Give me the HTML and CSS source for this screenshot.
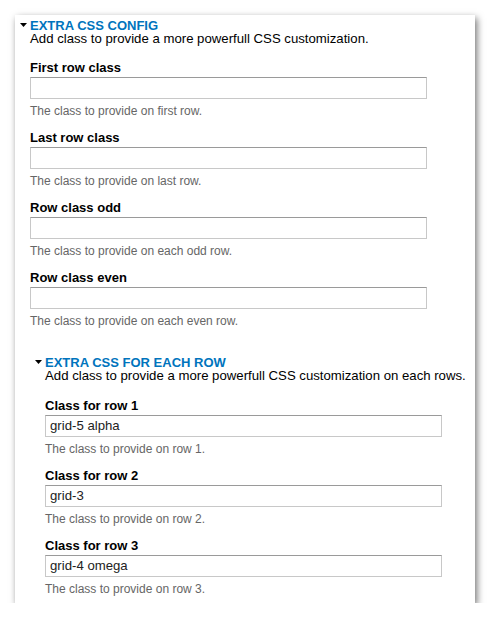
FILE: index.html
```html
<!DOCTYPE html>
<html>
<head>
<meta charset="utf-8">
<link rel="stylesheet" href="styles.css">
</head>
<body>
<div class="card">
  <section class="group">
    <div class="legend">
      <svg class="arrow" width="7" height="4" viewBox="0 0 7 4"><polygon points="0,0 7,0 3.5,4" fill="#000"/></svg>
      <span>EXTRA CSS CONFIG</span>
    </div>
    <div class="desc">Add class to provide a more powerfull CSS customization.</div>
    <div class="fields outer-fields">
      <div class="field">
        <label>First row class</label>
        <input type="text" value="">
        <div class="help">The class to provide on first row.</div>
      </div>
      <div class="field">
        <label>Last row class</label>
        <input type="text" value="">
        <div class="help">The class to provide on last row.</div>
      </div>
      <div class="field">
        <label>Row class odd</label>
        <input type="text" value="">
        <div class="help">The class to provide on each odd row.</div>
      </div>
      <div class="field">
        <label>Row class even</label>
        <input type="text" value="">
        <div class="help">The class to provide on each even row.</div>
      </div>
    </div>
    <section class="group nested">
      <div class="legend">
        <svg class="arrow" width="7" height="4" viewBox="0 0 7 4"><polygon points="0,0 7,0 3.5,4" fill="#000"/></svg>
        <span>EXTRA CSS FOR EACH ROW</span>
      </div>
      <div class="desc">Add class to provide a more powerfull CSS customization on each rows.</div>
      <div class="fields">
        <div class="field">
          <label>Class for row 1</label>
          <input type="text" value="grid-5 alpha">
          <div class="help">The class to provide on row 1.</div>
        </div>
        <div class="field">
          <label>Class for row 2</label>
          <input type="text" value="grid-3">
          <div class="help">The class to provide on row 2.</div>
        </div>
        <div class="field">
          <label>Class for row 3</label>
          <input type="text" value="grid-4 omega">
          <div class="help">The class to provide on row 3.</div>
        </div>
      </div>
    </section>
  </section>
</div>
</body>
</html>
```

FILE: styles.css
```css
html, body {
  margin: 0;
  padding: 0;
  background: #fff;
}
body {
  font-family: "Liberation Sans", Arial, sans-serif;
  font-size: 13px;
  color: #000;
  padding: 15px 0 0 15px;
}
.card {
  width: 460px;
  box-sizing: border-box;
  background: #fff;
  padding: 4px 15px 7px 15px;
  box-shadow: 2px 3px 7px rgba(0, 0, 0, 0.55);
}
.group {
  display: flex;
  flex-direction: column;
}
.legend {
  position: relative;
  font-weight: bold;
  color: #0074bd;
  line-height: 13px;
}
.arrow {
  position: absolute;
  left: -10px;
  top: 4px;
}
.desc {
  font-size: 13.2px;
  line-height: 13px;
  white-space: nowrap;
}
.fields {
  display: flex;
  flex-direction: column;
  gap: 12px;
  margin-top: 16px;
}
.outer-fields {
  margin-top: 15px;
}
.field {
  display: flex;
  flex-direction: column;
}
.field label {
  font-weight: bold;
  line-height: 15px;
  margin-bottom: 2px;
}
.field input {
  box-sizing: border-box;
  width: 397px;
  height: 22px;
  margin: 0;
  padding: 0 4px;
  border: 1px solid #c8c8c8;
  border-top-color: #9a9a9a;
  font-family: "Liberation Sans", Arial, sans-serif;
  font-size: 13.2px;
  color: #222;
  background: #fff;
}
.help {
  margin-top: 6px;
  font-size: 12px;
  line-height: 13px;
  color: #666;
}
.nested {
  margin-top: 27.5px;
  padding-left: 15px;
}
```
